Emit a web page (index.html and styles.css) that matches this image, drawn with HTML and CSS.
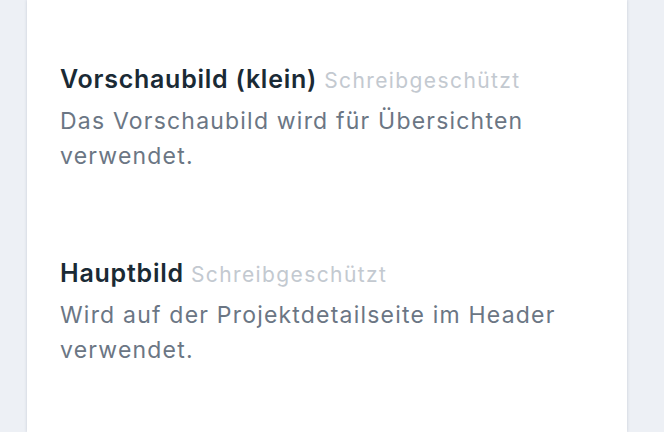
FILE: index.html
```html
<!DOCTYPE html>
<html lang="de">
<head>
<meta charset="utf-8">
<link rel="stylesheet" href="styles.css">
</head>
<body>
<main class="card">
  <section class="field">
    <h3 class="field-title">Vorschaubild (klein) <span class="readonly">Schreibgeschützt</span></h3>
    <p class="field-desc">Das Vorschaubild wird für Übersichten verwendet.</p>
  </section>
  <section class="field">
    <h3 class="field-title">Hauptbild <span class="readonly">Schreibgeschützt</span></h3>
    <p class="field-desc">Wird auf der Projektdetailseite im Header verwendet.</p>
  </section>
</main>
</body>
</html>
```

FILE: styles.css
```css
html, body {
  margin: 0;
  height: 100%;
}
body {
  background: #edf0f5;
  font-family: Inter, "Noto Sans", sans-serif;
  padding-left: 27px;
  box-sizing: border-box;
}
.card {
  width: 600px;
  height: 100%;
  background: #ffffff;
  box-shadow: 0 0 3px rgba(30, 40, 80, 0.18);
  box-sizing: border-box;
  padding: 61px 33px 0 33px;
  display: flex;
  flex-direction: column;
  gap: 81px;
}
.field-title {
  margin: 0;
  font-size: 25px;
  line-height: 36px;
  font-weight: 600;
  letter-spacing: 0.75px;
  color: #1a2a35;
}
.readonly {
  font-weight: 400;
  font-size: 21px;
  letter-spacing: 1.4px;
  color: #c3c9d0;
}
.field-desc {
  margin: 5px 0 0 0;
  font-size: 23px;
  line-height: 35px;
  letter-spacing: 1.2px;
  color: #6b7684;
  max-width: 500px;
}
```
